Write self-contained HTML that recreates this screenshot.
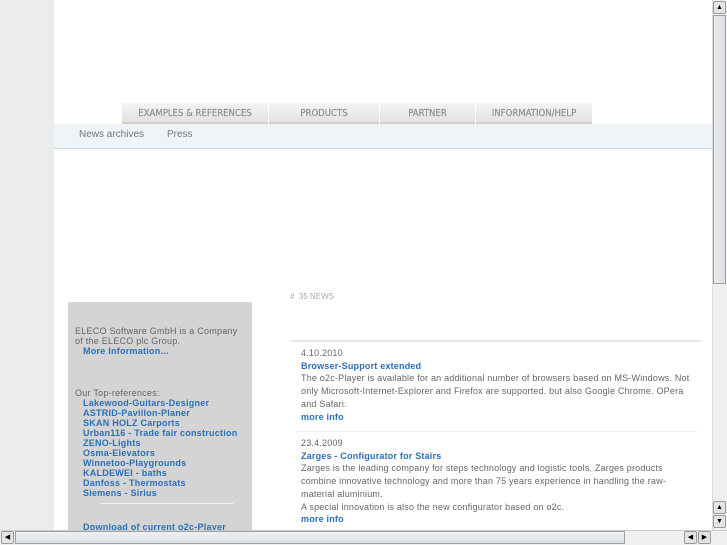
<!DOCTYPE html>
<html><head><meta charset="utf-8"><style>
*{margin:0;padding:0;box-sizing:border-box}
body{width:727px;height:545px;overflow:hidden;position:relative;background:#fff;font-family:"Liberation Sans",sans-serif;font-size:9px;color:#666}
.abs{position:absolute}
.tab{position:absolute;top:103px;height:21px;background:linear-gradient(#f4f4f4,#e2e2e2);border-bottom:2px solid #cfcfcf;color:#8f8f8f;font-size:9.5px;text-align:center;line-height:21px;font-family:"DejaVu Sans Condensed","Liberation Sans",sans-serif;-webkit-text-stroke:0.2px #8f8f8f}
a{color:#2a6fb8;font-weight:bold;text-decoration:none}
.box{left:68px;top:302px;width:184px;height:240px;background:#d4d4d4;padding:24px 0 0 7px;line-height:10px;letter-spacing:0.25px}
.box div{height:10px;white-space:nowrap}
.box .l{display:block;padding-left:8px;height:10px}
.news{left:301px;width:392px;line-height:12.7px;letter-spacing:0.2px}
</style></head><body>
<div class="abs" style="left:0;top:0;width:54px;height:530px;background:#ececec"></div>
<div class="tab" style="left:122px;width:146px">EXAMPLES &amp; REFERENCES</div>
<div class="tab" style="left:269px;width:110px">PRODUCTS</div>
<div class="tab" style="left:380px;width:95px">PARTNER</div>
<div class="tab" style="left:476px;width:116px">INFORMATION/HELP</div>
<div class="abs" style="left:54px;top:124px;width:658px;height:25px;background:#eff4f8;border-bottom:1px solid #cfd3d6"></div>
<div class="abs" style="left:79px;top:129px;font-size:10px;color:#777">News archives</div>
<div class="abs" style="left:167px;top:129px;font-size:10px;color:#777">Press</div>
<div class="abs box">
<div>ELECO Software GmbH is a Company</div><div>of the ELECO plc Group.</div><a class="l">More Information...</a>
<div style="height:32px"></div>
<div>Our Top-references:</div>
<a class="l">Lakewood-Guitars-Designer</a><a class="l">ASTRID-Pavillon-Planer</a><a class="l">SKAN HOLZ Carports</a><a class="l">Urban116 - Trade fair construction</a><a class="l">ZENO-Lights</a><a class="l">Osma-Elevators</a><a class="l">Winnetoo-Playgrounds</a><a class="l">KALDEWEI - baths</a><a class="l">Danfoss - Thermostats</a><a class="l">Siemens - Sirius</a>
<div style="margin:5px 0 0 25px;width:134px;height:1px;background:#f0f0f0"></div>
<a class="l" style="margin-top:18px">Download of current o2c-Player</a></div>
<div class="abs" style="left:290px;top:292px;font-size:8px;color:#aaa">#&nbsp; 35 NEWS</div>
<div class="abs" style="left:291px;top:340px;width:410px;height:2px;background:#e6e6e6"></div>
<div class="abs news" style="top:347px">4.10.2010<br><a>Browser-Support extended</a><br>The o2c-Player is available for an additional number of browsers based on MS-Windows. Not only Microsoft-Internet-Explorer and Firefox are supported. but also Google Chrome. OPera and Safari.<br><a>more info</a></div>
<div class="abs" style="left:295px;top:431px;width:402px;height:1px;background:#eee"></div>
<div class="abs news" style="top:437px">23.4.2009<br><a>Zarges - Configurator for Stairs</a><br>Zarges is the leading company for steps technology and logistic tools. Zarges products combine innovative technology and more than 75 years experience in handling the raw-material aluminium.<br>A special innovation is also the new configurator based on o2c.<br><a>more info</a></div>
<div class="abs" style="left:712px;top:0;width:15px;height:530px;background:#f0f0f0;border-left:1px solid #ddd"></div>
<div class="abs" style="left:713px;top:1px;width:13px;height:13px;background:#e4e4e4;border:1px solid #999;border-radius:2px;text-align:center;font-size:7px;line-height:11px;color:#000">▲</div>
<div class="abs" style="left:713px;top:15px;width:13px;height:269px;background:linear-gradient(90deg,#e8ecf0,#dcdfe4);border:1px solid #a0a0a0"></div>
<div class="abs" style="left:713px;top:501px;width:13px;height:13px;background:#e4e4e4;border:1px solid #999;border-radius:2px;text-align:center;font-size:7px;line-height:11px;color:#000">▲</div>
<div class="abs" style="left:713px;top:515px;width:13px;height:13px;background:#e4e4e4;border:1px solid #999;border-radius:2px;text-align:center;font-size:7px;line-height:11px;color:#000">▼</div>
<div class="abs" style="left:0;top:530px;width:727px;height:15px;background:#f0f0f0;border-top:1px solid #ccc"></div>
<div class="abs" style="left:1px;top:531px;width:13px;height:13px;background:#e4e4e4;border:1px solid #999;border-radius:2px;text-align:center;font-size:7px;line-height:11px;color:#000">◀</div>
<div class="abs" style="left:15px;top:531px;width:610px;height:13px;background:linear-gradient(#eef0f3,#dcdfe4);border:1px solid #a0a0a0"></div>
<div class="abs" style="left:684px;top:531px;width:13px;height:13px;background:#e4e4e4;border:1px solid #999;border-radius:2px;text-align:center;font-size:7px;line-height:11px;color:#000">◀</div>
<div class="abs" style="left:698px;top:531px;width:13px;height:13px;background:#e4e4e4;border:1px solid #999;border-radius:2px;text-align:center;font-size:7px;line-height:11px;color:#000">▶</div>
</body></html>
